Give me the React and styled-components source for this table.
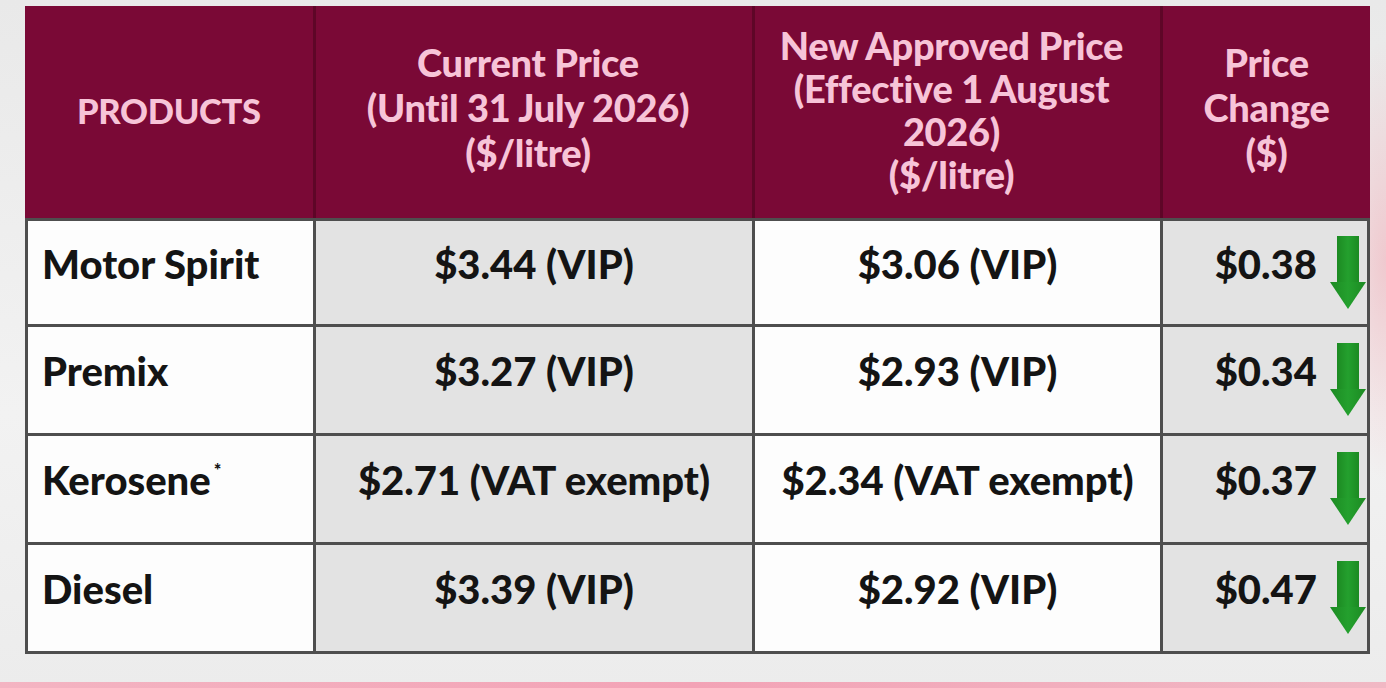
import React from "react";
import styled, { createGlobalStyle } from "styled-components";

const Global = createGlobalStyle`
  html, body { margin: 0; padding: 0; }
  body { font-family: Lato, "Noto Sans", sans-serif; }
`;

const Page = styled.div`
  width: 1386px;
  height: 688px;
  box-sizing: border-box;
  padding: 6px 16px 0 25px;
  background:
    radial-gradient(ellipse 60px 220px at 1386px 260px, rgba(240, 170, 180, 0.55), rgba(240, 170, 180, 0) 100%),
    linear-gradient(180deg, #e9e9e9 0%, #f2f2f2 60%, #ececec 100%);
  display: flex;
  flex-direction: column;
  overflow: hidden;
`;

const Table = styled.div`
  width: 1345px;
  display: flex;
  flex-direction: column;
  background: #4e4e4e;
  padding-bottom: 3px;
`;

const cols = "285px 436px 405px 204px";

const HeaderRow = styled.div`
  display: grid;
  grid-template-columns: ${cols};
  column-gap: 3px;
  padding: 0 3px;
  background: #5e0627;
  height: 212px;
`;

const HeadCell = styled.div`
  background: #7a0936;
  color: #f7c4d8;
  font-weight: 900;
  font-size: ${(p) => (p.$caps ? "34.5px" : "38px")};
  line-height: ${(p) => (p.$tight ? "43px" : "45px")};
  letter-spacing: -0.3px;
  display: flex;
  align-items: center;
  justify-content: ${(p) => (p.$left ? "flex-start" : "center")};
  text-align: center;
  padding-bottom: ${(p) => (p.$tight ? "4px" : "10px")};
  padding-right: ${(p) => (p.$shiftLeft ? "12px" : "0")};
  white-space: nowrap;
  &:first-child { margin-left: -3px; padding-left: 52px; padding-bottom: 4px; }
  &:last-child { margin-right: -3px; }
`;

const BodyRow = styled.div`
  display: grid;
  grid-template-columns: ${cols};
  grid-template-rows: ${(p) => p.$h}px;
  column-gap: 3px;
  padding: 0 3px;
  margin-top: 3px;
`;

const Cell = styled.div`
  background: ${(p) => (p.$shade ? "#e3e3e3" : "#fdfdfd")};
  color: #141414;
  font-weight: 900;
  font-size: 40px;
  display: flex;
  align-items: center;
  justify-content: ${(p) => p.$align || "center"};
  padding: ${(p) => p.$pad || "0"};
  padding-bottom: 18px;
  box-sizing: border-box;
  gap: 12px;
  white-space: nowrap;
  overflow: hidden;
`;

const Star = styled.sup`
  font-size: 18px;
  position: relative;
  top: -4px;
  margin-left: 3px;
`;

const ArrowWrap = styled.span`
  display: flex;
  margin: 9px 0 -9px;
`;

const Arrow = () => (
  <ArrowWrap>
    <svg width="38" height="74" viewBox="0 0 38 74">
      <defs>
        <linearGradient id="ag" x1="0" x2="1" y1="0" y2="0">
          <stop offset="0" stopColor="#1c8a22" />
          <stop offset="0.5" stopColor="#24a02e" />
          <stop offset="1" stopColor="#1c8a22" />
        </linearGradient>
      </defs>
      <rect x="8" y="0" width="22" height="48" fill="url(#ag)" />
      <polygon points="1,46 37,46 19,73" fill="url(#ag)" />
    </svg>
  </ArrowWrap>
);

const rows = [
  { name: "Motor Spirit", cur: "$3.44 (VIP)", next: "$3.06 (VIP)", diff: "$0.38", h: 103 },
  { name: "Premix", cur: "$3.27 (VIP)", next: "$2.93 (VIP)", diff: "$0.34", h: 106 },
  { name: "Kerosene", star: true, cur: "$2.71 (VAT exempt)", next: "$2.34 (VAT exempt)", diff: "$0.37", h: 106 },
  { name: "Diesel", cur: "$3.39 (VIP)", next: "$2.92 (VIP)", diff: "$0.47", h: 106 },
];

const BottomBar = styled.div`
  margin-top: auto;
  margin-left: -25px;
  margin-right: -16px;
  height: 6px;
  background: linear-gradient(90deg, #f4b4c2, #f3a3b6 50%, #f1b8c4);
`;

export default function App() {
  return (
    <>
      <Global />
      <Page>
        <Table>
          <HeaderRow>
            <HeadCell $caps $left>PRODUCTS</HeadCell>
            <HeadCell $shiftLeft>
              Current Price
              <br />
              (Until 31 July 2026)
              <br />
              ($/litre)
            </HeadCell>
            <HeadCell $tight $shiftLeft>
              New Approved Price
              <br />
              (Effective 1 August
              <br />
              2026)
              <br />
              ($/litre)
            </HeadCell>
            <HeadCell>
              Price
              <br />
              Change
              <br />
              ($)
            </HeadCell>
          </HeaderRow>
          {rows.map((r) => (
            <BodyRow key={r.name} $h={r.h}>
              <Cell $align="flex-start" $pad="0 0 0 14px">
                <span>
                  {r.name}
                  {r.star && <Star>*</Star>}
                </span>
              </Cell>
              <Cell $shade>{r.cur}</Cell>
              <Cell>{r.next}</Cell>
              <Cell $shade $align="flex-end" $pad="0 0 0 0">
                {r.diff}
                <Arrow />
              </Cell>
            </BodyRow>
          ))}
        </Table>
        <BottomBar />
      </Page>
    </>
  );
}
